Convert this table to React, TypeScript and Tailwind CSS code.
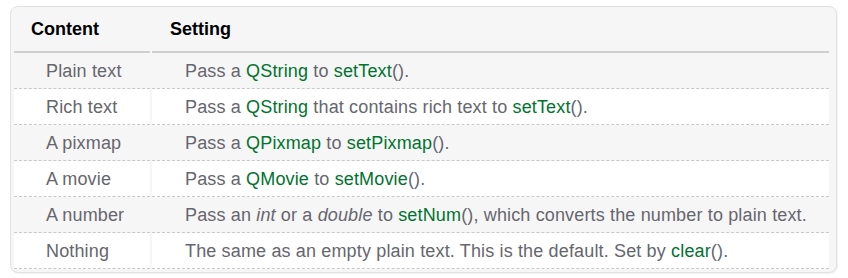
import React from 'react'

const code = 'text-[#00732f]'

const rows: { content: string; setting: React.ReactNode }[] = [
  {
    content: 'Plain text',
    setting: (
      <>
        Pass a <span className={code}>QString</span> to <span className={code}>setText</span>().
      </>
    ),
  },
  {
    content: 'Rich text',
    setting: (
      <>
        Pass a <span className={code}>QString</span> that contains rich text to{' '}
        <span className={code}>setText</span>().
      </>
    ),
  },
  {
    content: 'A pixmap',
    setting: (
      <>
        Pass a <span className={code}>QPixmap</span> to <span className={code}>setPixmap</span>().
      </>
    ),
  },
  {
    content: 'A movie',
    setting: (
      <>
        Pass a <span className={code}>QMovie</span> to <span className={code}>setMovie</span>().
      </>
    ),
  },
  {
    content: 'A number',
    setting: (
      <>
        Pass an <i>int</i> or a <i>double</i> to <span className={code}>setNum</span>(), which
        converts the number to plain text.
      </>
    ),
  },
  {
    content: 'Nothing',
    setting: (
      <>
        The same as an empty plain text. This is the default. Set by{' '}
        <span className={code}>clear</span>().
      </>
    ),
  },
]

export default function App() {
  return (
    <div className="w-[848px] h-[278px] bg-white pt-[6px] pl-[10px] font-['Liberation_Sans',Arial,sans-serif]">
      <div className="w-[827px] rounded-lg border border-[#e2e2e2] bg-[#f6f6f6] px-[3px] pb-[3px] shadow-[1px_1px_1px_rgba(0,0,0,0.06)]">
        <table className="w-[819px] table-fixed border-separate border-spacing-x-[2px] border-spacing-y-0 -mx-[2px] text-[18px] leading-none tracking-[0.15px]">
          <colgroup>
            <col className="w-[136px]" />
            <col />
          </colgroup>
          <thead>
            <tr className="h-[46px]">
              <th className="border-b-2 border-[#cfcfcf] pl-[17px] text-left font-bold text-black tracking-normal">
                Content
              </th>
              <th className="border-b-2 border-[#cfcfcf] pl-[18px] text-left font-bold text-black tracking-normal">
                Setting
              </th>
            </tr>
          </thead>
          <tbody>
            {rows.map((r, i) => (
              <tr
                key={r.content}
                className={`h-[36px] text-[#66666e] ${i % 2 === 0 ? 'bg-[#f6f6f6]' : 'bg-white'}`}
              >
                <td className="border-b border-dashed border-[#c9c9c9] pl-[32px] whitespace-nowrap">
                  {r.content}
                </td>
                <td className="border-b border-dashed border-[#c9c9c9] pl-[33px] whitespace-nowrap">
                  {r.setting}
                </td>
              </tr>
            ))}
          </tbody>
        </table>
      </div>
    </div>
  )
}
